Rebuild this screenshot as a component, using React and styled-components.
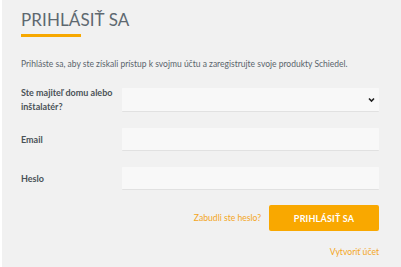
import React from 'react'
import styled, { createGlobalStyle } from 'styled-components'

const Global = createGlobalStyle`
  html, body { margin: 0; padding: 0; background: #fff; }
  body { font-family: Lato, "Open Sans", sans-serif; }
`

const Page = styled.div`
  width: 399px;
  height: 267px;
  margin-left: 2px;
  background: #f1f1f1;
  box-sizing: border-box;
  padding: 9px 22px 0 19px;
`

const Title = styled.h1`
  margin: 0;
  font-size: 17px;
  font-weight: 400;
  color: #5e6870;
  letter-spacing: 0.1px;
  line-height: 22px;
`

const Underline = styled.div`
  width: 60px;
  height: 3px;
  background: #f7a800;
  margin-top: 3px;
`

const Intro = styled.p`
  margin: 21px 0 0;
  font-size: 8.5px;
  color: #5a646c;
  line-height: 12px;
`

const Form = styled.form`
  margin-top: 18px;
  display: flex;
  flex-direction: column;
  gap: 16px;
`

const Row = styled.div`
  display: grid;
  grid-template-columns: 101px 1fr;
  align-items: center;
`

const Label = styled.label`
  font-size: 9px;
  font-weight: 700;
  color: #4a5157;
  line-height: 14px;
  margin: -3px 0;
`

const Field = styled.div`
  position: relative;
  height: ${p => p.$h}px;
  background: #f8f8f8;
  border-bottom: 1px solid #e1e1e1;
  border-radius: 1px;
`

const Chevron = styled.svg`
  position: absolute;
  right: 4px;
  top: 50%;
  transform: translateY(-50%);
`

const Actions = styled.div`
  margin-top: 15px;
  display: flex;
  justify-content: flex-end;
  align-items: center;
  gap: 8px;
`

const Link = styled.a`
  font-size: 8.6px;
  color: #f4a623;
  text-decoration: none;
`

const Button = styled.button`
  width: 110px;
  height: 26px;
  border: none;
  border-radius: 2px;
  background: #f9a800;
  color: #fff;
  font-family: Lato, sans-serif;
  font-weight: 700;
  font-size: 9px;
  letter-spacing: 0.2px;
`

const Footer = styled.div`
  display: flex;
  justify-content: flex-end;
  margin-top: 16px;
`

export default function App() {
  return (
    <>
      <Global />
      <Page>
        <Title>PRIHLÁSIŤ SA</Title>
        <Underline />
        <Intro>Prihláste sa, aby ste získali prístup k svojmu účtu a zaregistrujte svoje produkty Schiedel.</Intro>
        <Form>
          <Row>
            <Label>Ste majiteľ domu alebo<br />inštalatér?</Label>
            <Field $h={23}>
              <Chevron width="7" height="5" viewBox="0 0 7 5">
                <path d="M1 1 L3.5 3.5 L6 1" fill="none" stroke="#222" strokeWidth="1.6" />
              </Chevron>
            </Field>
          </Row>
          <Row>
            <Label>Email</Label>
            <Field $h={22} />
          </Row>
          <Row>
            <Label>Heslo</Label>
            <Field $h={22} />
          </Row>
        </Form>
        <Actions>
          <Link>Zabudli ste heslo?</Link>
          <Button>PRIHLÁSIŤ SA</Button>
        </Actions>
        <Footer>
          <Link>Vytvoriť účet</Link>
        </Footer>
      </Page>
    </>
  )
}
